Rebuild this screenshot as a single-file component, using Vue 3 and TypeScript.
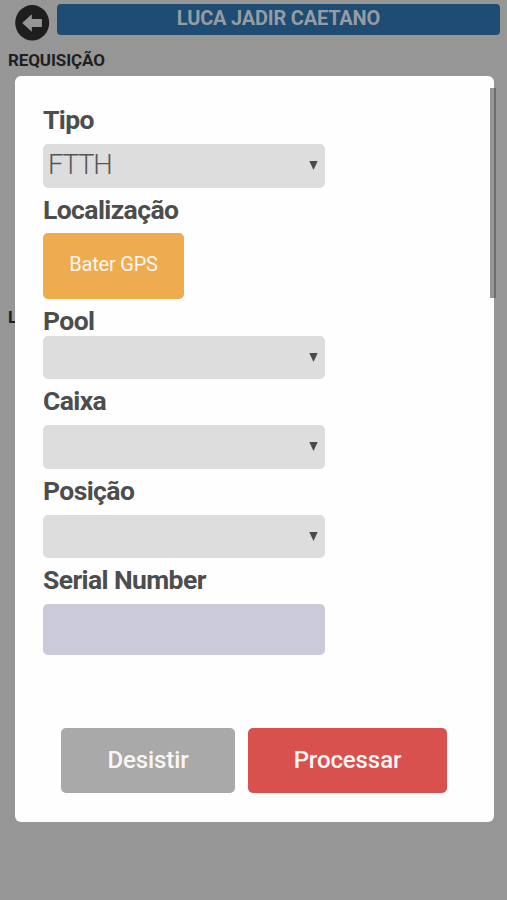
<script setup lang="ts">
import { ref } from 'vue'

interface Field {
  id: string
  label: string
  kind: 'select' | 'gps' | 'text'
  value: string
}

const customer = 'LUCA JADIR CAETANO'
const fields = ref<Field[]>([
  { id: 'tipo', label: 'Tipo', kind: 'select', value: 'FTTH' },
  { id: 'localizacao', label: 'Localização', kind: 'gps', value: '' },
  { id: 'pool', label: 'Pool', kind: 'select', value: '' },
  { id: 'caixa', label: 'Caixa', kind: 'select', value: '' },
  { id: 'posicao', label: 'Posição', kind: 'select', value: '' },
  { id: 'serial', label: 'Serial Number', kind: 'text', value: '' },
])
</script>

<template>
  <div class="screen">
    <header class="topbar">
      <svg class="back" viewBox="0 0 36 37" aria-hidden="true">
        <ellipse cx="18.2" cy="18.8" rx="17" ry="17.7" fill="#1e1e1e" />
        <path d="M8.2 19 17.8 10.2V15.1H27.9V22.9H17.8V27.8Z" fill="#969696" />
      </svg>
      <h1 class="customer">{{ customer }}</h1>
    </header>
    <h2 class="section">REQUISIÇÃO</h2>
    <h2 class="section second">L</h2>

    <div class="modal" role="dialog">
      <form class="form" @submit.prevent>
        <div v-for="field in fields" :key="field.id" class="field" :class="field.id">
          <label :for="field.id">{{ field.label }}</label>
          <div v-if="field.kind === 'select'" :id="field.id" class="select">
            <span class="value">{{ field.value }}</span>
            <svg class="caret" viewBox="0 0 9 9"><path d="M0.3 0H8.7L4.5 9Z" fill="#4a4a4a" /></svg>
          </div>
          <button v-else-if="field.kind === 'gps'" :id="field.id" type="button" class="gps">Bater GPS</button>
          <input v-else :id="field.id" v-model="field.value" class="serial-input" type="text" />
        </div>
      </form>
      <footer class="actions">
        <button type="button" class="cancel">Desistir</button>
        <button type="button" class="submit">Processar</button>
      </footer>
    </div>
    <div class="scroll-thumb"></div>
  </div>
</template>

<style>
body {
  background: #969696;
}
</style>

<style scoped>
.screen {
  position: relative;
  height: 900px;
  overflow: hidden;
  background: #969696;
  font-family: Roboto, "Liberation Sans", sans-serif;
  box-sizing: border-box;
}
.topbar {
  display: flex;
  gap: 7px;
  padding: 4px 7px 0 14px;
}
.back {
  width: 36px;
  height: 37px;
  flex: none;
}
.customer {
  flex: 1;
  height: 31px;
  margin: 0;
  border-radius: 4px;
  background: #1f4c73;
  color: #969ca4;
  font-size: 20px;
  font-weight: 700;
  letter-spacing: -0.2px;
  line-height: 28px;
  text-align: center;
}
.section {
  margin: 8px 0 0 8px;
  color: #202020;
  font-size: 17px;
  font-weight: 700;
  letter-spacing: -0.1px;
  line-height: 22px;
}
.second {
  margin-top: 235px;
}
.modal {
  position: absolute;
  top: 76px;
  left: 15px;
  display: flex;
  flex-direction: column;
  justify-content: space-between;
  box-sizing: border-box;
  width: 479px;
  height: 746px;
  padding: 27px 28px 29px;
  border-radius: 6px;
  background: #fefefe;
}
.field {
  display: flex;
  flex-direction: column;
  align-items: flex-start;
}
label {
  height: 41px;
  color: #4d4d4d;
  font-size: 26.5px;
  font-weight: 700;
  letter-spacing: -0.6px;
  line-height: 34px;
  white-space: nowrap;
}
.field + .field label {
  height: 46px;
  line-height: 43px;
}
.field.localizacao label {
  height: 45px;
}
.field.pool label {
  height: 37px;
}
.select {
  display: flex;
  align-items: center;
  justify-content: space-between;
  box-sizing: border-box;
  width: 282px;
  height: 43.5px;
  padding: 0 7px 0 5px;
  border-radius: 5px;
  background: #dddddd;
}
.value {
  padding-bottom: 3px;
  color: #555;
  font-size: 27.5px;
  font-weight: 300;
  letter-spacing: -1.2px;
}
.caret {
  width: 9px;
  height: 9px;
}
button {
  border: 0;
  border-radius: 5px;
  color: #fbf6f3;
  font-family: inherit;
}
.gps {
  width: 141px;
  height: 66px;
  padding: 0 0 3px;
  background: #eeac4e;
  font-size: 20px;
  letter-spacing: -0.2px;
}
.serial-input {
  box-sizing: border-box;
  width: 282px;
  height: 51px;
  border: 0;
  border-radius: 5px;
  background: #cbcad8;
}
.actions {
  display: flex;
  gap: 13px;
  padding-left: 18px;
}
.actions button {
  height: 65px;
  padding: 0 0 2px;
  font-size: 24px;
  font-weight: 500;
  letter-spacing: -0.1px;
}
.actions .cancel {
  width: 174px;
  background: #a9a9a9;
}
.actions .submit {
  width: 199px;
  background: #d8514f;
}
.scroll-thumb {
  position: absolute;
  top: 88px;
  left: 490px;
  width: 6px;
  height: 210px;
  background: rgba(80, 80, 80, 0.6);
}
</style>
